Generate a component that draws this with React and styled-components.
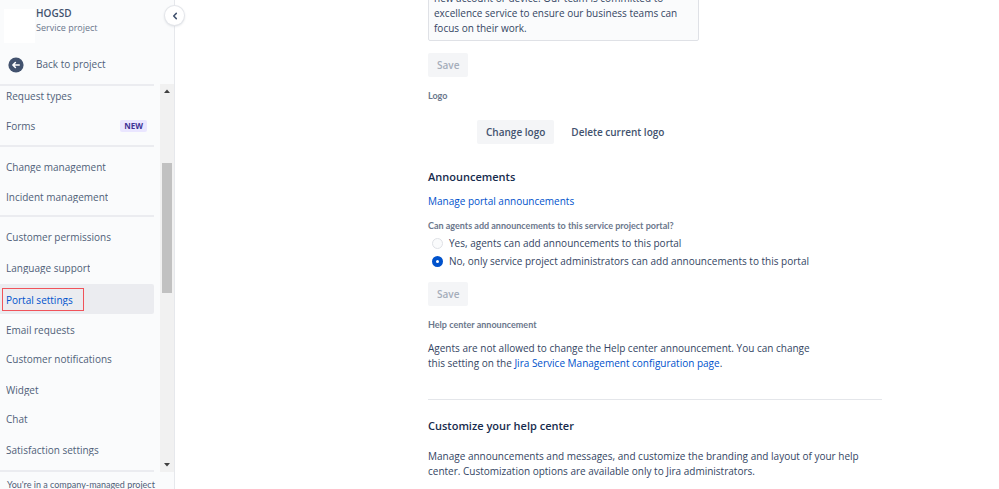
import React, { useState } from 'react'
import styled, { createGlobalStyle } from 'styled-components'

const groups = [
  [
    { name: 'Request types' },
    { name: 'Forms', isNew: true },
  ],
  [
    { name: 'Change management', clip: true },
    { name: 'Incident management', clip: true },
  ],
  [
    { name: 'Customer permissions' },
    { name: 'Language support', clip: true },
    { name: 'Portal settings', clip: true, active: true },
    { name: 'Email requests', clip: true },
    { name: 'Customer notifications' },
    { name: 'Widget', clip: true },
    { name: 'Chat' },
    { name: 'Satisfaction settings', clip: true },
  ],
]

const Sidebar = () => {
  return (
    <STSidebar>
      <STProject>
        <STAvatar />
        <div>
          <STProjectName>HOGSD</STProjectName>
          <STProjectType>Service project</STProjectType>
        </div>
      </STProject>
      <STBack href='#project'>
        <svg width='16' height='16' viewBox='0 0 16 16'>
          <circle cx='8' cy='8' r='7.6' fill='#42526e' />
          <path d='M11.2 8H5M7.4 5.5L4.9 8l2.5 2.5' fill='none' stroke='#fff' strokeWidth='1.6' strokeLinecap='round' strokeLinejoin='round' />
        </svg>
        Back to project
      </STBack>
      <STMiddle>
        <STNav>
          {groups.map((items, i) => (
            <STGroup key={i}>
              {items.map((item) => (
                <li key={item.name}>
                  <STNavLink href='#settings' $active={item.active}>
                    <STMark $active={item.active}>
                      <STLabel $clip={item.clip}>{item.name}</STLabel>
                    </STMark>
                    {item.isNew && <STBadge>NEW</STBadge>}
                  </STNavLink>
                </li>
              ))}
            </STGroup>
          ))}
        </STNav>
        <STScrollbar>
          <svg width='6' height='4' viewBox='0 0 6 4'><path d='M0 4L3 0.6 6 4z' fill='#404040' /></svg>
          <STThumb />
          <svg width='6' height='4' viewBox='0 0 6 4'><path d='M0 0L3 3.4 6 0z' fill='#404040' /></svg>
        </STScrollbar>
      </STMiddle>
      <STFooter>You're in a company-managed project</STFooter>
      <STCollapse aria-label='Collapse sidebar'>
        <svg width='6' height='8' viewBox='0 0 6 8'>
          <path d='M4.3 1.4L1.7 4l2.6 2.6' fill='none' stroke='#42526e' strokeWidth='1.5' strokeLinecap='round' strokeLinejoin='round' />
        </svg>
      </STCollapse>
    </STSidebar>
  )
}

const App = () => {
  const [intro, setIntro] = useState(
    'new account or device. Our team is committed to\nexcellence service to ensure our business teams can\nfocus on their work.'
  )
  const [allow, setAllow] = useState('no')

  return (
    <STPage>
      <GlobalStyle />
      <Sidebar />
      <STMain>
        <STContent>
          <STTextarea aria-label='Introduction text' rows={3} value={intro} onChange={(e) => setIntro(e.target.value)} />
          <STButton disabled>Save</STButton>
          <STCaption>Logo</STCaption>
          <STLogoRow>
            <STButton>Change logo</STButton>
            <STButton $subtle>Delete current logo</STButton>
          </STLogoRow>

          <STTitle>Announcements</STTitle>
          <STManage href='#announcements'>Manage portal announcements</STManage>
          <STFieldset>
            <legend>Can agents add announcements to this service project portal?</legend>
            <STOption>
              <input type='radio' name='allow' checked={allow === 'yes'} onChange={() => setAllow('yes')} />
              Yes, agents can add announcements to this portal
            </STOption>
            <STOption>
              <input type='radio' name='allow' checked={allow === 'no'} onChange={() => setAllow('no')} />
              No, only service project administrators can add announcements to this portal
            </STOption>
          </STFieldset>
          <STButton disabled>Save</STButton>
          <STCaption>Help center announcement</STCaption>
          <STText $narrow>
            Agents are not allowed to change the Help center announcement. You can change{' '}
            <br />
            this setting on the <STLink href='#configuration'>Jira Service Management configuration page</STLink>.
          </STText>

          <STRule />

          <STTitle>Customize your help center</STTitle>
          <STText>
            Manage announcements and messages, and customize the branding and layout of your help{' '}
            <br />
            center. Customization options are available only to Jira administrators.
          </STText>
        </STContent>
      </STMain>
    </STPage>
  )
}

const GlobalStyle = createGlobalStyle`
  * {
    box-sizing: border-box;
  }

  body {
    margin: 0;
    background: #fff;
    color: #344563;
    font: 10px/15px 'Open Sans', 'Noto Sans', sans-serif;
  }

  button, textarea {
    font: inherit;
    color: inherit;
  }

  a {
    text-decoration: none;
  }
`

const STPage = styled.div`
  display: flex;
  height: 100vh;
  overflow: hidden;
`

const STSidebar = styled.aside`
  position: relative;
  flex: none;
  display: flex;
  flex-direction: column;
  width: 175px;
  background: #fafbfc;
  border-right: 1px solid #e6e8ec;
  color: #505f79;
`

const STProject = styled.div`
  display: flex;
  height: 49px;
  padding: 6px 4px 0;
`

const STAvatar = styled.div`
  width: 31px;
  height: 34px;
  margin: 3px 1px 0 0;
  background: #fff;
`

const STProjectName = styled.div`
  color: #42526e;
  font-weight: 600;
`

const STProjectType = styled.div`
  color: #6b778c;
  font-size: 9px;
  line-height: 13px;
`

const STBack = styled.a`
  display: flex;
  align-items: center;
  gap: 12px;
  height: 31px;
  padding-left: 8px;
  color: #505f79;
`

const STMiddle = styled.div`
  flex: 1;
  display: flex;
  min-height: 0;
  margin-top: 4px;
`

const STNav = styled.nav`
  flex: 1;
  margin-right: 6px;
  border-top: 2px solid #ebecf0;
  border-bottom: 2px solid #ebecf0;
  overflow: hidden;
`

const STGroup = styled.ul`
  margin: 0;
  padding: 4px 0;
  list-style: none;

  /* the list is scrolled a little */
  &:first-child {
    margin-top: -5px;
  }

  &:first-child {
    padding-top: 0;
  }

  & + & {
    border-top: 2px solid #ebecf0;
  }

  &:last-child {
    padding-top: 5px;
  }
`

const STNavLink = styled.a`
  display: flex;
  align-items: center;
  justify-content: space-between;
  height: 30px;
  margin: ${(props) => (props.$active ? '2px 0 0' : '0')};
  padding: 0 7px 0 2px;
  border-radius: 0 2px 2px 0;
  background: ${(props) => (props.$active ? '#ebecf0' : 'transparent')};
  color: ${(props) => (props.$active ? '#0052cc' : '#505f79')};
`

const STMark = styled.span`
  padding: 4px 10px 4px 3px;
  border: 1px solid ${(props) => (props.$active ? '#f0535a' : 'transparent')};
`

const STLabel = styled.span`
  display: block;
  height: ${(props) => (props.$clip ? '13px' : '15px')};
  overflow: ${(props) => (props.$clip ? 'hidden' : 'visible')};
`

const STBadge = styled.b`
  padding: 0 4px;
  border-radius: 2px;
  background: #eae6ff;
  color: #403294;
  font-size: 8px;
  line-height: 12px;
`

const STScrollbar = styled.div`
  display: flex;
  flex-direction: column;
  align-items: center;
  justify-content: space-between;
  width: 14px;
  padding: 5px 0;
  background: #f1f1f1;
`

const STThumb = styled.div`
  width: 10px;
  height: 130px;
  margin-bottom: 100px;
  background: #c1c1c1;
`

const STFooter = styled.div`
  height: 17px;
  padding: 5px 0 0 7px;
  font-family: Lato, sans-serif;
  font-size: 9px;
  line-height: 15px;
  white-space: nowrap;
`

const STCollapse = styled.button`
  position: absolute;
  top: 6px;
  right: -10px;
  display: flex;
  align-items: center;
  justify-content: center;
  width: 19px;
  height: 19px;
  padding: 0;
  border: 0;
  border-radius: 50%;
  background: #fff;
  box-shadow: 0 0 0 1px #e4e6ea, 0 1px 3px #c8ccd4;
`

const STMain = styled.main`
  flex: 1;
  padding: 0 117px 0 253px;
  overflow: hidden;
`

/* scrolled so that the first line is partly out of view */
const STContent = styled.div`
  display: flex;
  flex-direction: column;
  align-items: flex-start;
  margin-top: -14px;
`

const STTextarea = styled.textarea`
  width: 271px;
  height: 55px;
  padding: 4px 5px;
  border: 1px solid #dfe1e6;
  border-radius: 2px;
  background: #fafbfc;
  resize: none;
  overflow: hidden;
  margin-bottom: 12px;
`

const STButton = styled.button`
  height: 24px;
  padding: 0 9px;
  border: 0;
  border-radius: 2px;
  background: ${(props) => (props.$subtle ? 'transparent' : '#f4f5f7')};
  color: #42526e;
  font-weight: 600;

  &:disabled {
    color: #a5adba;
  }
`

const STCaption = styled.div`
  margin-top: 11px;
  color: #6b778c;
  font-family: Lato, sans-serif;
  font-size: 9px;
  font-weight: 700;
`

const STLogoRow = styled.div`
  display: flex;
  gap: 8px;
  padding: 17px 0 24px 49px;
`

const STTitle = styled.h2`
  margin: 0;
  color: #172b4d;
  font-size: 11px;
  font-weight: 600;
  line-height: 18px;
`

const STLink = styled.a`
  color: #0052cc;
`

const STManage = styled(STLink)`
  margin: 8px 0 9px;
`

const STFieldset = styled.fieldset`
  margin: 0 0 12px;
  padding: 0;
  border: 0;

  legend {
    padding: 0 0 1px;
    color: #6b778c;
    font-family: Lato, sans-serif;
    font-size: 9px;
    font-weight: 700;
  }
`

const STOption = styled.label`
  display: flex;
  align-items: center;
  gap: 6px;
  height: 18px;
  padding-left: 4px;

  input {
    appearance: none;
    width: 11px;
    height: 11px;
    margin: 0;
    border: 1px solid #dfe1e6;
    border-radius: 50%;
    background: #fafbfc;
  }

  input:checked {
    border: 4px solid #0052cc;
    background: #fff;
  }
`

const STText = styled.p`
  max-width: ${(props) => (props.$narrow ? '400px' : '450px')};
  margin: 9px 0 0;

  ${STTitle} + & {
    margin-top: 14px;
  }
`

const STRule = styled.hr`
  width: 100%;
  margin: 28px 0 17px;
  border: 0;
  border-top: 1px solid #e4e6ea;
`

export default App
